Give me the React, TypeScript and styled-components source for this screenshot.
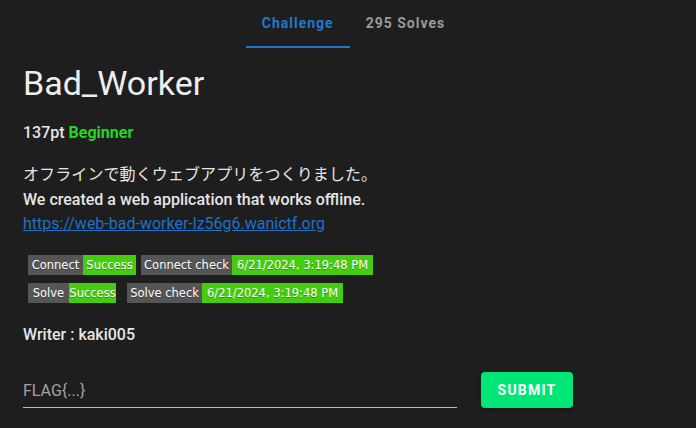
import styled, { createGlobalStyle } from "styled-components";

const Global = createGlobalStyle`
  html, body {
    margin: 0;
    background: #1e1e1e;
  }
  body {
    font-family: Roboto, "Noto Sans CJK JP", sans-serif;
    color: #e6e6e6;
  }
`;

const Page = styled.div`
  width: 696px;
  height: 428px;
  background: #1e1e1e;
  overflow: hidden;
`;

const Tabs = styled.div`
  display: flex;
  justify-content: center;
  height: 48px;
  padding-left: 11px;
`;

const Tab = styled.div<{ $active?: boolean }>`
  display: flex;
  align-items: center;
  justify-content: center;
  padding: 0 16px;
  height: 46px;
  font-size: 14px;
  font-weight: 700;
  letter-spacing: 1px;
  color: ${(p) => (p.$active ? "#1e78d2" : "#9a9a9a")};
  border-bottom: 2px solid ${(p) => (p.$active ? "#1e78d2" : "transparent")};
`;

const Body = styled.div`
  padding: 14px 23px 0;
`;

const Title = styled.h1`
  margin: 0;
  font-size: 34px;
  font-weight: 400;
  line-height: 42px;
  color: #eeeeee;
`;

const Points = styled.div`
  margin-top: 17px;
  font-size: 16px;
  font-weight: 500;
  line-height: 24px;
  color: #e6e6e6;

  .level {
    color: #1fd81f;
    font-weight: 700;
  }
`;

const Description = styled.div`
  margin-top: 18px;
  font-size: 16px;
  line-height: 24px;

  .ja {
    font-weight: 400;
    letter-spacing: 0.1px;
  }
  .en {
    font-weight: 500;
    margin-top: 1px;
  }
  a {
    color: #1e70c8;
    text-decoration: underline;
  }
`;

const Badges = styled.div`
  margin-top: 19px;
  padding-left: 5px;
  display: flex;
  flex-direction: column;
  gap: 8px;
`;

const BadgeRow = styled.div`
  display: flex;
`;

const Badge = styled.div<{ $space?: number }>`
  display: flex;
  height: 20px;
  font-family: "DejaVu Sans", Verdana, sans-serif;
  font-size: 11.5px;
  line-height: 20px;
  color: #ffffff;
  text-shadow: 0 1px 0 rgba(1, 1, 1, 0.3);
  margin-right: ${(p) => p.$space ?? 0}px;
`;

const BadgePart = styled.span<{ $value?: boolean; $w: number }>`
  width: ${(p) => p.$w}px;
  text-align: center;
  background: ${(p) => (p.$value ? "#44cc11" : "#555555")};
  white-space: nowrap;
`;

const Writer = styled.div`
  margin-top: 20px;
  font-size: 16px;
  font-weight: 500;
  line-height: 24px;
`;

const Form = styled.form`
  margin-top: 25px;
  display: flex;
  align-items: flex-end;
  gap: 24px;
`;

const FlagInput = styled.input`
  width: 434px;
  box-sizing: border-box;
  padding: 4px 0 5px;
  height: 33px;
  border: none;
  border-bottom: 1px solid #bdbdbd;
  background: transparent;
  font-family: Roboto, sans-serif;
  font-size: 16px;
  line-height: 23px;
  color: #eeeeee;
  outline: none;

  &::placeholder {
    color: #a3a3a3;
    opacity: 1;
  }
`;

const Submit = styled.button`
  height: 36px;
  min-width: 92px;
  padding: 0 16px;
  border: none;
  border-radius: 4px;
  background: #00e676;
  color: #ffffff;
  font-family: Roboto, sans-serif;
  font-size: 14px;
  font-weight: 700;
  letter-spacing: 1.2px;
  text-transform: uppercase;
  box-shadow: 0 3px 1px -2px rgba(0, 0, 0, 0.2), 0 2px 2px 0 rgba(0, 0, 0, 0.14),
    0 1px 5px 0 rgba(0, 0, 0, 0.12);
`;

export default function App() {
  return (
    <Page>
      <Global />
      <Tabs>
        <Tab $active>Challenge</Tab>
        <Tab>295 Solves</Tab>
      </Tabs>
      <Body>
        <Title>Bad_Worker</Title>
        <Points>
          137pt <span className="level">Beginner</span>
        </Points>
        <Description>
          <div className="ja">オフラインで動くウェブアプリをつくりました。</div>
          <div className="en">We created a web application that works offline.</div>
          <a href="#">https://web-bad-worker-lz56g6.wanictf.org</a>
        </Description>
        <Badges>
          <BadgeRow>
            <Badge $space={5}>
              <BadgePart $w={55}>Connect</BadgePart>
              <BadgePart $w={53} $value>Success</BadgePart>
            </Badge>
            <Badge>
              <BadgePart $w={91}>Connect check</BadgePart>
              <BadgePart $w={141} $value>6/21/2024, 3:19:48 PM</BadgePart>
            </Badge>
          </BadgeRow>
          <BadgeRow>
            <Badge $space={11}>
              <BadgePart $w={41}>Solve</BadgePart>
              <BadgePart $w={47} $value>Success</BadgePart>
            </Badge>
            <Badge>
              <BadgePart $w={75}>Solve check</BadgePart>
              <BadgePart $w={141} $value>6/21/2024, 3:19:48 PM</BadgePart>
            </Badge>
          </BadgeRow>
        </Badges>
        <Writer>Writer : kaki005</Writer>
        <Form onSubmit={(e) => e.preventDefault()}>
          <FlagInput placeholder="FLAG{...}" />
          <Submit type="submit">Submit</Submit>
        </Form>
      </Body>
    </Page>
  );
}
